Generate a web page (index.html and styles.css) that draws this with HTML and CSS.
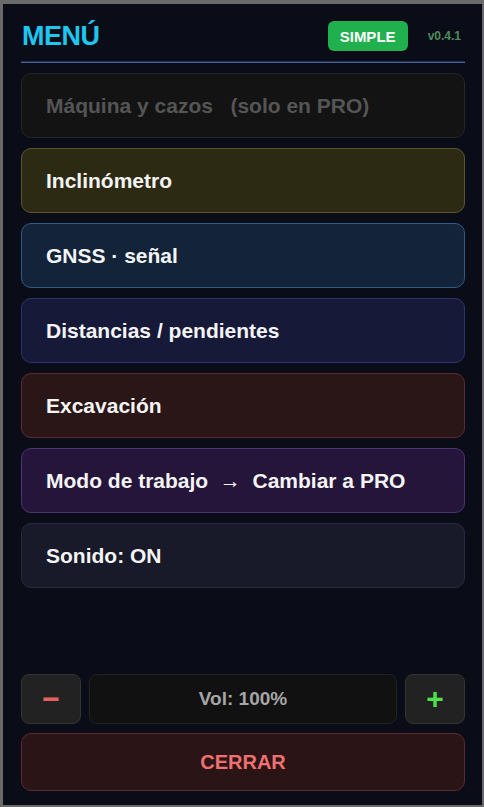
FILE: index.html
```html
<!DOCTYPE html>
<html lang="es">
<head>
<meta charset="utf-8">
<title>Menú</title>
<link rel="stylesheet" href="styles.css">
</head>
<body>
<div class="panel">
  <header class="header">
    <h1 class="title">MENÚ</h1>
    <div class="header-right">
      <span class="badge">SIMPLE</span>
      <span class="version">v0.4.1</span>
    </div>
  </header>
  <div class="sep"></div>
  <nav class="menu">
    <div class="item disabled">Máquina y cazos&nbsp;&nbsp;&nbsp;(solo en PRO)</div>
    <div class="item incl">Inclinómetro</div>
    <div class="item gnss">GNSS · señal</div>
    <div class="item dist">Distancias / pendientes</div>
    <div class="item exc">Excavación</div>
    <div class="item modo">Modo de trabajo&nbsp;&nbsp;→&nbsp;&nbsp;Cambiar a PRO</div>
    <div class="item sonido">Sonido: ON</div>
  </nav>
  <div class="bottom">
    <div class="vol-row">
      <div class="vbtn minus">−</div>
      <div class="vol">Vol: 100%</div>
      <div class="vbtn plus">+</div>
    </div>
    <div class="close">CERRAR</div>
  </div>
</div>
</body>
</html>
```
FILE: styles.css
```css
* { box-sizing: border-box; }
html, body { margin: 0; padding: 0; }
body {
  background: #6a6a6a;
  width: 484px;
  height: 807px;
  padding: 4px 2px 2px 3px;
  font-family: "Liberation Sans", Arial, sans-serif;
}
.panel {
  height: 801px;
  background: #0a0d17;
  padding: 17px 17px 14px 18px;
  display: flex;
  flex-direction: column;
}
.header {
  display: flex;
  align-items: center;
  justify-content: space-between;
  height: 30px;
}
.title {
  margin: 0;
  font-size: 27px;
  font-weight: bold;
  color: #1ec6f0;
  letter-spacing: -0.5px;
  padding-left: 1px;
}
.header-right {
  display: flex;
  align-items: center;
  gap: 20px;
  padding-right: 4px;
}
.badge {
  display: flex;
  align-items: center;
  justify-content: center;
  width: 80px;
  height: 30px;
  background: #20b04e;
  color: #ffffff;
  font-weight: bold;
  font-size: 15px;
  border-radius: 6px;
}
.version {
  color: #4f8a58;
  font-size: 12px;
  font-weight: bold;
}
.sep {
  margin-top: 10px;
  height: 2px;
  border-top: 1px solid #22305a;
  border-bottom: 1px solid #4a5d92;
}
.menu {
  margin-top: 10px;
  display: flex;
  flex-direction: column;
  gap: 10px;
}
.item {
  height: 65px;
  border: 1px solid #333;
  border-radius: 10px;
  display: flex;
  align-items: center;
  padding-left: 24px;
  font-size: 21px;
  font-weight: bold;
  color: #f4f4f4;
}
.disabled { background: #131313; border-color: #262626; color: #555555; }
.incl { background: #2c2a13; border-color: #5c5530; }
.gnss { background: #13233a; border-color: #2f5c84; }
.dist { background: #171939; border-color: #2e336e; }
.exc { background: #2b1617; border-color: #5a2c30; }
.modo { background: #25153a; border-color: #4f3473; }
.sonido { background: #181929; border-color: #282a40; }
.bottom {
  margin-top: auto;
  display: flex;
  flex-direction: column;
  gap: 9px;
}
.vol-row {
  display: flex;
  gap: 8px;
  height: 50px;
}
.vbtn {
  width: 60px;
  background: #222222;
  border: 1px solid #333333;
  border-radius: 8px;
  display: flex;
  align-items: center;
  justify-content: center;
  font-size: 30px;
  font-weight: bold;
}
.minus { color: #e26262; }
.plus { color: #4ee04e; }
.vol {
  flex: 1;
  background: #111111;
  border: 1px solid #222222;
  border-radius: 8px;
  display: flex;
  align-items: center;
  justify-content: center;
  color: #a6a6a6;
  font-size: 19px;
  font-weight: bold;
}
.close {
  height: 58px;
  background: #2b1416;
  border: 1px solid #5a2a2e;
  border-radius: 10px;
  display: flex;
  align-items: center;
  justify-content: center;
  color: #ee7070;
  font-size: 20px;
  font-weight: bold;
}
```
